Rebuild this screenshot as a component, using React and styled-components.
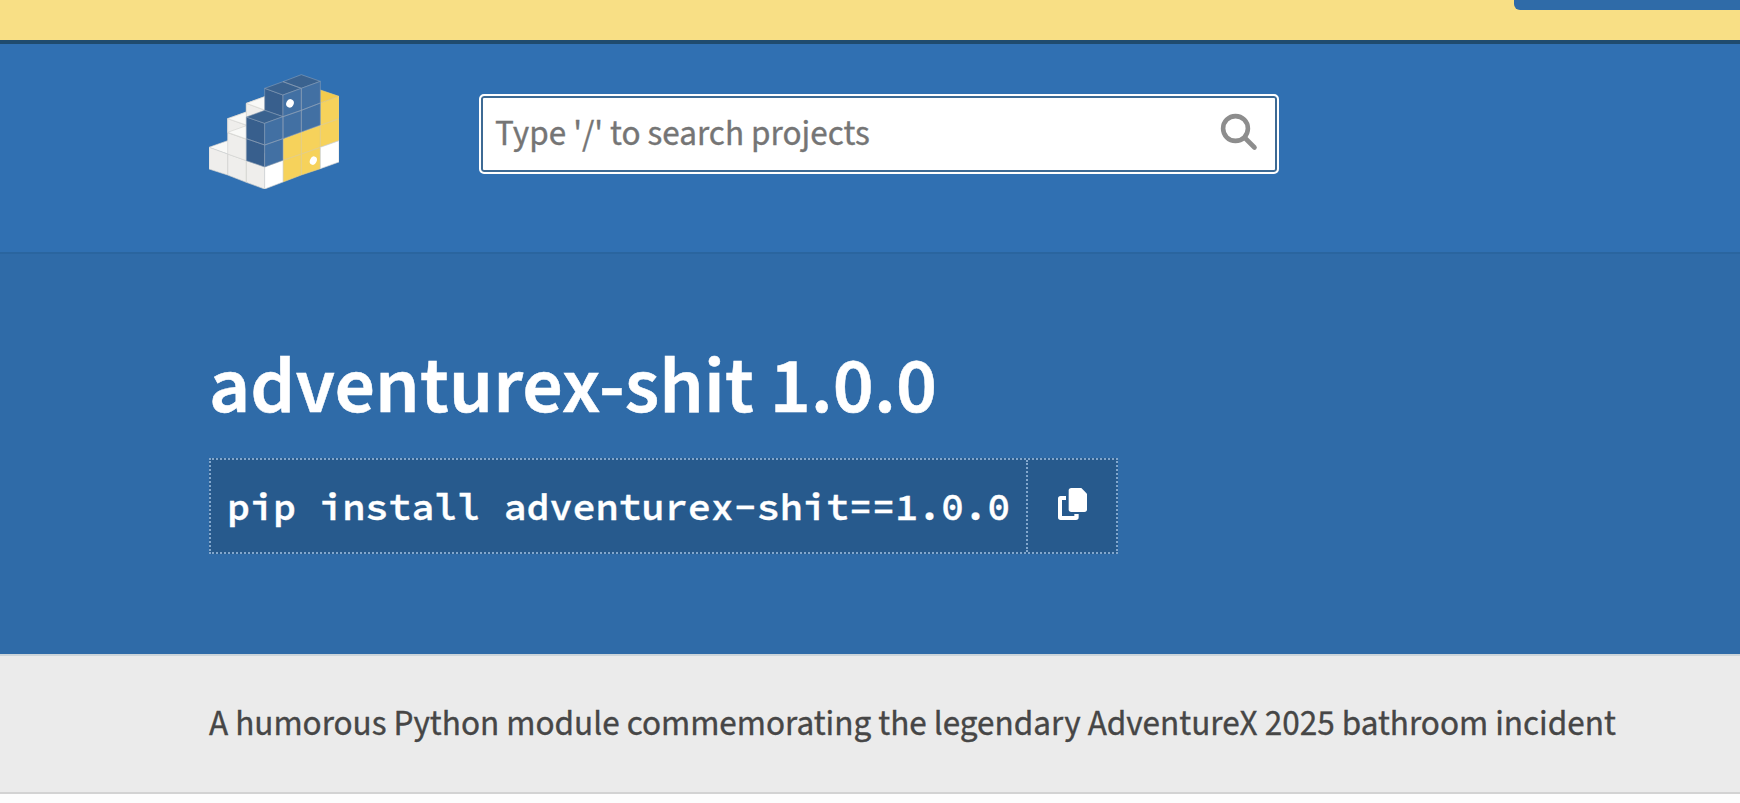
import React from "react";
import styled, { createGlobalStyle } from "styled-components";

const GlobalStyle = createGlobalStyle`
  *, *::before, *::after { box-sizing: border-box; }
  html { overflow: hidden; }
  body {
    margin: 0;
    background: #fdfdfd;
    font-family: "Source Sans 3", "Source Sans Pro", "Noto Sans CJK SC", "Open Sans", sans-serif;
    color: #464646;
    overflow: hidden;
  }
`;

const Page = styled.div`
  width: 100%;
  height: 803px;
  display: flex;
  flex-direction: column;
  overflow: hidden;
`;

const NoticeBar = styled.div`
  height: 44px;
  flex: none;
  display: flex;
  justify-content: flex-end;
  align-items: flex-start;
  background: #f8df85;
  border-bottom: 4px solid #1f4b6e;
`;

const NoticeAction = styled.div`
  width: 226px;
  height: 10px;
  background: #2f6ba8;
  border-bottom-left-radius: 6px;
`;

const Header = styled.header`
  height: 210px;
  flex: none;
  display: flex;
  align-items: flex-start;
  padding: 29px 0 0 209px;
  background: #3070b2;
  border-bottom: 2px solid #2a659f;
`;

const Logo = styled.svg`
  width: 130px;
  height: 116px;
  flex: none;
  margin-right: 140px;
`;

const SearchForm = styled.div`
  width: 800px;
  height: 80px;
  margin-top: 21px;
  display: flex;
  align-items: center;
  justify-content: space-between;
  padding: 0 19px 0 14px;
  background: #fff;
  border: 2px solid #fff;
  border-radius: 5px;
  box-shadow: inset 0 0 0 2px #3d6a94;
`;

const Placeholder = styled.span`
  font-size: 35.2px;
  line-height: 46px;
  color: #757575;
  -webkit-text-stroke: 0.35px currentColor;
  white-space: nowrap;
`;

const SearchIcon = styled.svg`
  width: 38px;
  height: 38px;
  flex: none;
  margin-bottom: 5px;
`;

const Banner = styled.section`
  height: 400px;
  flex: none;
  display: flex;
  flex-direction: column;
  align-items: flex-start;
  padding: 84px 0 0 209px;
  background: #2f6ba8;
`;

const Title = styled.h1`
  margin: 0 0 20px;
  height: 100px;
  font-size: 80px;
  line-height: 99px;
  font-weight: 600;
  color: #fff;
  -webkit-text-stroke: 0.5px currentColor;
  white-space: nowrap;
`;

const PipCommand = styled.div`
  width: 909px;
  height: 96px;
  display: flex;
  color: #fff;
  background: #275a8d;
  border: 2px dotted #82a7cd;
`;

const Command = styled.code`
  width: 815px;
  padding-left: 16px;
  font-family: "Source Code Pro", "Noto Sans Mono CJK SC", "DejaVu Sans Mono", monospace;
  font-size: 38.4px;
  font-weight: 600;
  line-height: 92px;
  -webkit-text-stroke: 0.3px currentColor;
  white-space: nowrap;
`;

const CopyButton = styled.div`
  flex: 1;
  display: flex;
  justify-content: center;
  padding-top: 28px;
  border-left: 2px dotted #82a7cd;
`;

const CopyIcon = styled.svg`
  width: 29px;
  height: 32px;
`;

const Summary = styled.section`
  height: 140px;
  flex: none;
  display: flex;
  align-items: center;
  padding-left: 209px;
  background: #ebebeb;
  border-top: 2px solid #cdd5da;
  border-bottom: 2px solid #d3d3d3;
`;

const SummaryText = styled.p`
  margin: 0;
  font-size: 35.2px;
  line-height: 48px;
  color: #464646;
  -webkit-text-stroke: 0.35px currentColor;
  white-space: nowrap;
`;

function PackageLogo() {
  return (
    <Logo viewBox="27 38 390 348" aria-label="PyPI">
      <g stroke="#d4d4d2" strokeWidth="2" strokeLinejoin="round">
        <path fill="#f9f9f7" d="M27 261 L83 241 L139 221 L194 280 V320 L139 301 Z" />
        <path fill="#efeeec" d="M27 261 L83 281 V344 L27 326 Z M83 281 L139 301 V366 L83 344 Z M139 301 L194 320 V386 L139 366 Z" />
        <path fill="#f9f9f7" d="M83 175 L139 155 V195 L83 215 Z M139 129 L194 109 V150 L139 170 Z" />
        <path fill="#efeeec" d="M83 175 L139 195 V237 L83 217 Z M83 217 L139 236 V301 L83 281 Z M139 129 L194 150 L172 158 L139 170 Z" />
        <path fill="#f9f9f7" d="M83 175 L139 155 V194 Z M139 129 L194 109 V149 Z M83 216 L139 196 V236 Z" />
        <path fill="#f3cb4b" stroke="#e6cb78" d="M361 89 L417 108 L361 128 Z" />
        <path fill="#f6d25b" stroke="#e2cd8c" d="M361 128 L417 108 V175 L361 195 Z M361 195 L417 175 V241 L361 261 Z M304 215 L361 195 V261 L304 281 Z M249 235 L304 215 V281 L249 300 Z M249 300 L304 281 V344 L249 365 Z M304 281 L361 261 V325 L304 344 Z" />
        <path fill="#fff" d="M194 320 L249 300 V365 L194 386 Z M361 261 L417 241 V305 L361 325 Z" />
      </g>
      <g stroke="#93a5ba" strokeWidth="1.6" strokeLinejoin="round">
        <path fill="#385f8d" d="M139 170 L194 189 V254 L139 235 Z M139 235 L194 254 V320 L139 301 Z M194 84 L249 104 V169 L194 150 Z" />
        <path fill="#3a628f" d="M194 84 L249 64 L304 84 L249 104 Z M249 64 L304 43 L361 63 L304 84 Z M139 170 L194 150 L249 169 L194 189 Z" />
        <path fill="#4270a3" d="M194 189 L249 169 V235 L194 254 Z M194 254 L249 235 V300 L194 320 Z M249 104 L304 84 V150 L249 169 Z M304 84 L361 63 V128 L304 150 Z M249 169 L304 150 V215 L249 235 Z M304 150 L361 128 V194 L304 215 Z" />
      </g>
      <ellipse cx="270" cy="129" rx="11" ry="13" transform="rotate(25 270 129)" fill="#fff" />
      <ellipse cx="340" cy="301" rx="10" ry="13" transform="rotate(25 340 301)" fill="#fff" />
    </Logo>
  );
}

export default function App() {
  return (
    <>
      <GlobalStyle />
      <Page>
        <NoticeBar>
          <NoticeAction />
        </NoticeBar>
        <Header>
          <PackageLogo />
          <SearchForm>
            <Placeholder>Type '/' to search projects</Placeholder>
            <SearchIcon viewBox="0 0 38 38" fill="none" stroke="#8d8d8d" strokeWidth="4.6" strokeLinecap="round">
              <circle cx="15.5" cy="15.5" r="12.4" />
              <path d="M25 25 L34.5 34.5" />
            </SearchIcon>
          </SearchForm>
        </Header>
        <Banner>
          <Title>adventurex-shit 1.0.0</Title>
          <PipCommand>
            <Command>pip install adventurex-shit==1.0.0</Command>
            <CopyButton>
              <CopyIcon viewBox="0 0 87 96">
                <path
                  fill="#fff"
                  d="M40 0 H70 L87 17 V64 Q87 72 79 72 H40 Q32 72 32 64 V8 Q32 0 40 0 Z"
                />
                <path
                  fill="#fff"
                  d="M24 24 V36 H12 V84 H49 V78 H62 V88 Q62 96 54 96 H8 Q0 96 0 88 V32 Q0 24 8 24 Z"
                />
              </CopyIcon>
            </CopyButton>
          </PipCommand>
        </Banner>
        <Summary>
          <SummaryText>
            A humorous Python module commemorating the legendary AdventureX 2025 bathroom incident
          </SummaryText>
        </Summary>
      </Page>
    </>
  );
}
